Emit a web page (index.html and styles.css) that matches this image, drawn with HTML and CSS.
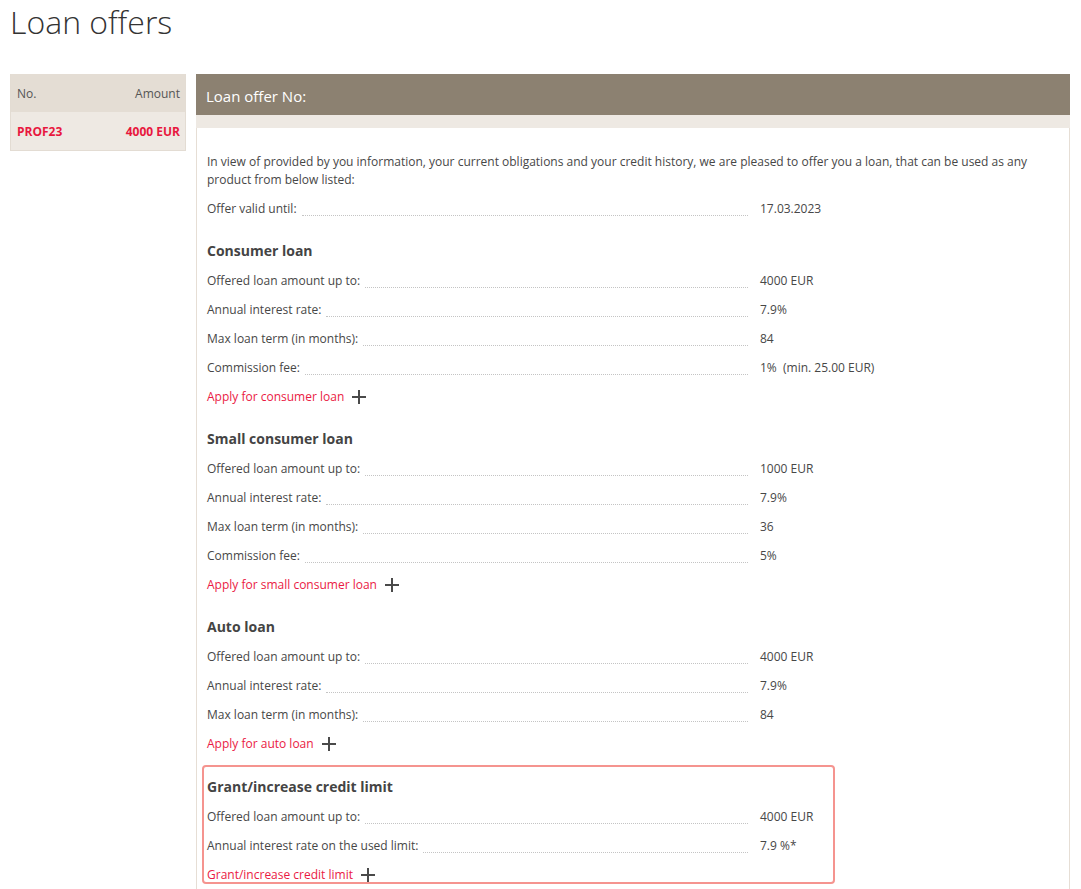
FILE: index.html
```html
<!DOCTYPE html>
<html>
<head>
<meta charset="utf-8">
<link rel="stylesheet" href="styles.css">
</head>
<body>
<h1 class="title">Loan offers</h1>
<div class="layout">
  <aside class="list">
    <div class="list-head"><span>No.</span><span>Amount</span></div>
    <div class="list-row"><span>PROF23</span><span>4000 EUR</span></div>
  </aside>
  <main class="panel">
    <div class="panel-head">Loan offer No:</div>
    <div class="panel-strip"></div>
    <div class="panel-body">
      <p class="intro">In view of provided by you information, your current obligations and your credit history, we are pleased to offer you a loan, that can be used as any product from below listed:</p>
      <div class="row"><div class="lbl"><span>Offer valid until:</span><i class="dots"></i></div><span class="val">17.03.2023</span></div>

      <section class="sec">
        <h2>Consumer loan</h2>
        <div class="row"><div class="lbl"><span>Offered loan amount up to:</span><i class="dots"></i></div><span class="val">4000 EUR</span></div>
        <div class="row"><div class="lbl"><span>Annual interest rate:</span><i class="dots"></i></div><span class="val">7.9%</span></div>
        <div class="row"><div class="lbl"><span>Max loan term (in months):</span><i class="dots"></i></div><span class="val">84</span></div>
        <div class="row"><div class="lbl"><span>Commission fee:</span><i class="dots"></i></div><span class="val">1%&nbsp; (min. 25.00 EUR)</span></div>
        <div class="row apply"><a>Apply for consumer loan</a><svg class="plus" viewBox="0 0 14 14"><path d="M0 7H14M7 0V14"/></svg></div>
      </section>

      <section class="sec">
        <h2>Small consumer loan</h2>
        <div class="row"><div class="lbl"><span>Offered loan amount up to:</span><i class="dots"></i></div><span class="val">1000 EUR</span></div>
        <div class="row"><div class="lbl"><span>Annual interest rate:</span><i class="dots"></i></div><span class="val">7.9%</span></div>
        <div class="row"><div class="lbl"><span>Max loan term (in months):</span><i class="dots"></i></div><span class="val">36</span></div>
        <div class="row"><div class="lbl"><span>Commission fee:</span><i class="dots"></i></div><span class="val">5%</span></div>
        <div class="row apply"><a>Apply for small consumer loan</a><svg class="plus" viewBox="0 0 14 14"><path d="M0 7H14M7 0V14"/></svg></div>
      </section>

      <section class="sec">
        <h2>Auto loan</h2>
        <div class="row"><div class="lbl"><span>Offered loan amount up to:</span><i class="dots"></i></div><span class="val">4000 EUR</span></div>
        <div class="row"><div class="lbl"><span>Annual interest rate:</span><i class="dots"></i></div><span class="val">7.9%</span></div>
        <div class="row"><div class="lbl"><span>Max loan term (in months):</span><i class="dots"></i></div><span class="val">84</span></div>
        <div class="row apply"><a>Apply for auto loan</a><svg class="plus" viewBox="0 0 14 14"><path d="M0 7H14M7 0V14"/></svg></div>
      </section>

      <section class="sec highlight">
        <h2>Grant/increase credit limit</h2>
        <div class="row"><div class="lbl"><span>Offered loan amount up to:</span><i class="dots"></i></div><span class="val">4000 EUR</span></div>
        <div class="row"><div class="lbl"><span>Annual interest rate on the used limit:</span><i class="dots"></i></div><span class="val">7.9 %*</span></div>
        <div class="row apply"><a>Grant/increase credit limit</a><svg class="plus" viewBox="0 0 14 14"><path d="M0 7H14M7 0V14"/></svg></div>
      </section>
    </div>
  </main>
</div>
</body>
</html>
```

FILE: styles.css
```css
* { box-sizing: border-box; }
html, body { margin: 0; padding: 0; background: #fff; }
body {
  font-family: "Open Sans", "Liberation Sans", sans-serif;
  font-size: 12px;
  color: #474747;
  padding: 0 11px 0 10px;
}
.title {
  margin: 3px 0 33px;
  font-size: 32px;
  line-height: 38px;
  font-weight: 300;
  color: #333;
}
.layout {
  display: flex;
  gap: 10px;
  align-items: flex-start;
}
.list {
  width: 176px;
  flex: none;
  border: 1px solid #e3dcd3;
  border-top: none;
}
.list-head, .list-row {
  display: flex;
  justify-content: space-between;
  align-items: center;
  height: 38px;
  padding: 0 5px 0 6px;
}
.list-head { background: #e4ddd4; color: #555; }
.list-row { background: #eee9e3; color: #e8173e; font-weight: 700; }
.panel { flex: 1; min-width: 0; }
.panel-head {
  background: #8c8171;
  color: #fff;
  font-size: 15px;
  height: 41px;
  line-height: 44px;
  padding-left: 10px;
}
.panel-strip { height: 13px; background: #eee9e3; }
.panel-body {
  border-left: 1px solid #e6ded5;
  border-right: 1px solid #e6ded5;
  padding: 25px 10px 40px;
}
.intro { margin: 0; line-height: 18px; }
.row {
  display: flex;
  margin-top: 11px;
  line-height: 18px;
  height: 18px;
}
.lbl {
  width: 541px;
  flex: none;
  display: flex;
  align-items: stretch;
}
.dots {
  flex: 1;
  margin: 0 0 2px 5px;
  border-bottom: 1px dotted #c4c4c4;
}
.val { margin-left: 12px; white-space: nowrap; }
.sec { margin-top: 23px; }
.sec h2 {
  margin: 0;
  font-size: 14px;
  line-height: 20px;
  font-weight: 700;
  color: #444;
}
.apply { align-items: center; }
.apply a { color: #ea1a44; }
.plus {
  width: 14px;
  height: 14px;
  margin-left: 8px;
  stroke: #4a4a4a;
  stroke-width: 2;
  fill: none;
}
.highlight {
  margin: 12px 0 0 -5px;
  width: 633px;
  border: 2px solid #f5948f;
  border-radius: 4px;
  padding: 10px 3px 0;
  height: 119px;
}
```
